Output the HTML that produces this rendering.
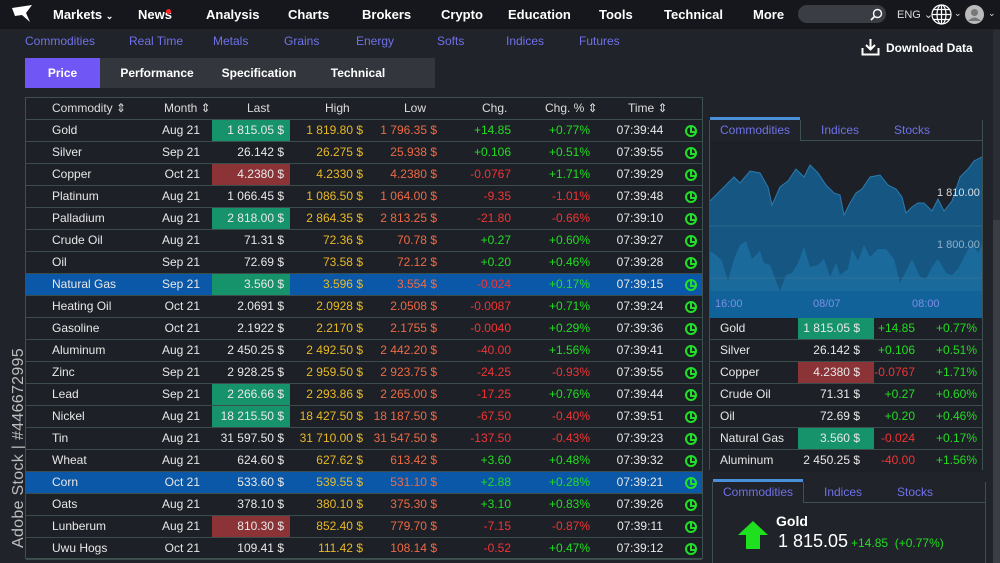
<!DOCTYPE html>
<html><head><meta charset="utf-8"><style>
*{margin:0;padding:0;box-sizing:border-box}
body{width:1000px;height:563px;overflow:hidden;background:#202329;font-family:"Liberation Sans",sans-serif;color:#e8e8e8;position:relative}
.a{position:absolute}
.nav{left:0;top:0;width:1000px;height:29px;background:#15171c}
.sub{position:absolute;top:34px;font-size:12px;color:#6f72e8}
.tab{position:absolute;top:58px;height:30px;font-size:12px;font-weight:bold;color:#fff;line-height:30px;text-align:center}
.tbl{left:25px;top:97px;width:678px;height:462px;border:1px solid #3d5250;background:#1d2026}
.hd{position:absolute;top:0;left:0;width:676px;height:22px;border-bottom:1px solid #3d5250;font-size:12px;line-height:21px;color:#ddd}
.r{position:absolute;left:0;width:676px;height:22px;border-bottom:1px solid #3a4d4b;font-size:12px;line-height:21px}
.r span,.hd span{position:absolute;top:0;white-space:nowrap}
.c1{left:26px}
.c2{left:110px;width:64px;text-align:right}
.c3{left:186px;width:78px;height:21px;text-align:right;padding-right:6px}
.c4{left:262px;width:75px;text-align:right;color:#e9b925}
.c5{left:336px;width:75px;text-align:right;color:#ee6a44}
.c6{left:410px;width:75px;text-align:right}
.c7{left:490px;width:74px;text-align:right}
.c8{left:580px;width:68px;text-align:center}
.c9{left:659px;top:5px!important;width:12px;height:12px;border:2px solid #22e02a;border-radius:50%}
.c9:after{content:"";position:absolute;left:3px;top:0px;width:3px;height:4px;border-left:2px solid #22e02a;border-bottom:2px solid #22e02a}
.g{color:#22dd22}.rd{color:#f03535}
.gb{background:#16936a}.rb{background:#8b3337}
.sel{background:#0b58a8}
.rt{position:absolute;left:710px;width:272px;height:22px;border-bottom:1px solid #3a4d4b;font-size:12px;line-height:21px;background:#1d2026}
.rt span{position:absolute;top:0;white-space:nowrap}
.d1{left:10px}.d2{left:88px;width:76px;height:21px;text-align:right;padding-right:14px}.d3{left:150px;width:55px;text-align:right}.d4{left:205px;width:62px;text-align:right;color:#22dd22}
</style></head><body>
<div class="a nav"></div>
<svg class="a" style="left:12px;top:5px" width="22" height="20" viewBox="0 0 22 20"><path d="M0 3 L20 0 L14 8 L18 17 L10 10 L3 11 Z" fill="#fff"/></svg>
<b class="a" style="left:53px;top:7px;font-size:13px;color:#fff">Markets <span style="font-size:9px">⌄</span></b>
<b class="a" style="left:138px;top:7px;font-size:13px;color:#fff">News</b>
<div class="a" style="left:166px;top:9px;width:5px;height:5px;border-radius:50%;background:#f22"></div>
<b class="a" style="left:206px;top:7px;font-size:13px;color:#fff">Analysis</b>
<b class="a" style="left:288px;top:7px;font-size:13px;color:#fff">Charts</b>
<b class="a" style="left:362px;top:7px;font-size:13px;color:#fff">Brokers</b>
<b class="a" style="left:441px;top:7px;font-size:13px;color:#fff">Crypto</b>
<b class="a" style="left:508px;top:7px;font-size:13px;color:#fff">Education</b>
<b class="a" style="left:599px;top:7px;font-size:13px;color:#fff">Tools</b>
<b class="a" style="left:664px;top:7px;font-size:13px;color:#fff">Technical</b>
<b class="a" style="left:753px;top:7px;font-size:13px;color:#fff">More</b>
<div class="a" style="left:798px;top:5px;width:88px;height:18px;border-radius:9px;background:#3a3d44"></div>
<svg class="a" style="left:870px;top:8px" width="13" height="13"><circle cx="7.5" cy="5.5" r="4" fill="none" stroke="#fff" stroke-width="1.4"/><path d="M4.5 8.5 L1 12" stroke="#fff" stroke-width="1.6"/></svg>
<div class="a" style="left:897px;top:8px;font-size:11px;color:#ddd">ENG ⌄</div>
<svg class="a" style="left:931px;top:4px" width="21" height="21" viewBox="0 0 21 21" fill="none" stroke="#fff" stroke-width="1.2"><circle cx="10.5" cy="10.5" r="9.5"/><ellipse cx="10.5" cy="10.5" rx="4.5" ry="9.5"/><path d="M1 10.5H20M2.5 5.5H18.5M2.5 15.5H18.5M10.5 1V20"/></svg>
<div class="a" style="left:954px;top:8px;font-size:9px;color:#ddd">⌄</div>
<svg class="a" style="left:965px;top:5px" width="19" height="19"><circle cx="9.5" cy="9.5" r="9.5" fill="#bbb"/><circle cx="9.5" cy="7.5" r="3.5" fill="#777"/><path d="M3 16 Q9.5 9 16 16" fill="#777"/></svg>
<div class="a" style="left:988px;top:8px;font-size:9px;color:#ddd">⌄</div>

<div class="sub" style="left:25px">Commodities</div>
<div class="sub" style="left:129px">Real Time</div>
<div class="sub" style="left:213px">Metals</div>
<div class="sub" style="left:284px">Grains</div>
<div class="sub" style="left:356px">Energy</div>
<div class="sub" style="left:437px">Softs</div>
<div class="sub" style="left:506px">Indices</div>
<div class="sub" style="left:579px">Futures</div>
<svg class="a" style="left:861px;top:38px" width="19" height="18" fill="none" stroke="#fff" stroke-width="2"><path d="M9.5 1V11M5 7L9.5 11.5L14 7M1.5 10V16.5H17.5V10"/></svg>
<b class="a" style="left:886px;top:41px;font-size:12px;color:#fff">Download Data</b>

<div class="a" style="left:25px;top:58px;width:410px;height:30px;background:#33363d"></div>
<div class="tab" style="left:25px;width:75px;background:#7057f5">Price</div>
<div class="tab" style="left:110px;width:94px">Performance</div>
<div class="tab" style="left:212px;width:94px">Specification</div>
<div class="tab" style="left:320px;width:76px">Technical</div>

<div class="a" style="left:10px;top:548px;transform:rotate(-90deg);transform-origin:0 0;font-size:16px;color:#bdbdbd;white-space:nowrap;letter-spacing:.3px">Adobe Stock | #446672995</div>

<div class="a tbl">
<div class="hd"><span class="c1">Commodity ⇕</span><span style="left:138px">Month ⇕</span><span style="left:221px">Last</span><span style="left:299px">High</span><span style="left:378px">Low</span><span style="left:456px">Chg.</span><span style="left:519px">Chg. % ⇕</span><span style="left:602px">Time ⇕</span></div>
<div class="r" style="top:22px"><span class="c1">Gold</span><span class="c2">Aug 21</span><span class="c3 gb">1 815.05 $</span><span class="c4">1 819.80 $</span><span class="c5">1 796.35 $</span><span class="c6 g">+14.85</span><span class="c7 g">+0.77%</span><span class="c8">07:39:44</span><span class="c9"></span></div>
<div class="r" style="top:44px"><span class="c1">Silver</span><span class="c2">Sep 21</span><span class="c3">26.142 $</span><span class="c4">26.275 $</span><span class="c5">25.938 $</span><span class="c6 g">+0.106</span><span class="c7 g">+0.51%</span><span class="c8">07:39:55</span><span class="c9"></span></div>
<div class="r" style="top:66px"><span class="c1">Copper</span><span class="c2">Oct 21</span><span class="c3 rb">4.2380 $</span><span class="c4">4.2330 $</span><span class="c5">4.2380 $</span><span class="c6 rd">-0.0767</span><span class="c7 g">+1.71%</span><span class="c8">07:39:29</span><span class="c9"></span></div>
<div class="r" style="top:88px"><span class="c1">Platinum</span><span class="c2">Aug 21</span><span class="c3">1 066.45 $</span><span class="c4">1 086.50 $</span><span class="c5">1 064.00 $</span><span class="c6 rd">-9.35</span><span class="c7 rd">-1.01%</span><span class="c8">07:39:48</span><span class="c9"></span></div>
<div class="r" style="top:110px"><span class="c1">Palladium</span><span class="c2">Aug 21</span><span class="c3 gb">2 818.00 $</span><span class="c4">2 864.35 $</span><span class="c5">2 813.25 $</span><span class="c6 rd">-21.80</span><span class="c7 rd">-0.66%</span><span class="c8">07:39:10</span><span class="c9"></span></div>
<div class="r" style="top:132px"><span class="c1">Crude Oil</span><span class="c2">Aug 21</span><span class="c3">71.31 $</span><span class="c4">72.36 $</span><span class="c5">70.78 $</span><span class="c6 g">+0.27</span><span class="c7 g">+0.60%</span><span class="c8">07:39:27</span><span class="c9"></span></div>
<div class="r" style="top:154px"><span class="c1">Oil</span><span class="c2">Sep 21</span><span class="c3">72.69 $</span><span class="c4">73.58 $</span><span class="c5">72.12 $</span><span class="c6 g">+0.20</span><span class="c7 g">+0.46%</span><span class="c8">07:39:28</span><span class="c9"></span></div>
<div class="r sel" style="top:176px"><span class="c1">Natural Gas</span><span class="c2">Sep 21</span><span class="c3 gb">3.560 $</span><span class="c4">3.596 $</span><span class="c5">3.554 $</span><span class="c6 rd">-0.024</span><span class="c7 g">+0.17%</span><span class="c8">07:39:15</span><span class="c9"></span></div>
<div class="r" style="top:198px"><span class="c1">Heating Oil</span><span class="c2">Oct 21</span><span class="c3">2.0691 $</span><span class="c4">2.0928 $</span><span class="c5">2.0508 $</span><span class="c6 rd">-0.0087</span><span class="c7 g">+0.71%</span><span class="c8">07:39:24</span><span class="c9"></span></div>
<div class="r" style="top:220px"><span class="c1">Gasoline</span><span class="c2">Oct 21</span><span class="c3">2.1922 $</span><span class="c4">2.2170 $</span><span class="c5">2.1755 $</span><span class="c6 rd">-0.0040</span><span class="c7 g">+0.29%</span><span class="c8">07:39:36</span><span class="c9"></span></div>
<div class="r" style="top:242px"><span class="c1">Aluminum</span><span class="c2">Aug 21</span><span class="c3">2 450.25 $</span><span class="c4">2 492.50 $</span><span class="c5">2 442.20 $</span><span class="c6 rd">-40.00</span><span class="c7 g">+1.56%</span><span class="c8">07:39:41</span><span class="c9"></span></div>
<div class="r" style="top:264px"><span class="c1">Zinc</span><span class="c2">Sep 21</span><span class="c3">2 928.25 $</span><span class="c4">2 959.50 $</span><span class="c5">2 923.75 $</span><span class="c6 rd">-24.25</span><span class="c7 rd">-0.93%</span><span class="c8">07:39:55</span><span class="c9"></span></div>
<div class="r" style="top:286px"><span class="c1">Lead</span><span class="c2">Sep 21</span><span class="c3 gb">2 266.66 $</span><span class="c4">2 293.86 $</span><span class="c5">2 265.00 $</span><span class="c6 rd">-17.25</span><span class="c7 g">+0.76%</span><span class="c8">07:39:44</span><span class="c9"></span></div>
<div class="r" style="top:308px"><span class="c1">Nickel</span><span class="c2">Aug 21</span><span class="c3 gb">18 215.50 $</span><span class="c4">18 427.50 $</span><span class="c5">18 187.50 $</span><span class="c6 rd">-67.50</span><span class="c7 rd">-0.40%</span><span class="c8">07:39:51</span><span class="c9"></span></div>
<div class="r" style="top:330px"><span class="c1">Tin</span><span class="c2">Aug 21</span><span class="c3">31 597.50 $</span><span class="c4">31 710.00 $</span><span class="c5">31 547.50 $</span><span class="c6 rd">-137.50</span><span class="c7 rd">-0.43%</span><span class="c8">07:39:23</span><span class="c9"></span></div>
<div class="r" style="top:352px"><span class="c1">Wheat</span><span class="c2">Aug 21</span><span class="c3">624.60 $</span><span class="c4">627.62 $</span><span class="c5">613.42 $</span><span class="c6 g">+3.60</span><span class="c7 g">+0.48%</span><span class="c8">07:39:32</span><span class="c9"></span></div>
<div class="r sel" style="top:374px"><span class="c1">Corn</span><span class="c2">Oct 21</span><span class="c3">533.60 $</span><span class="c4">539.55 $</span><span class="c5">531.10 $</span><span class="c6 g">+2.88</span><span class="c7 g">+0.28%</span><span class="c8">07:39:21</span><span class="c9"></span></div>
<div class="r" style="top:396px"><span class="c1">Oats</span><span class="c2">Aug 21</span><span class="c3">378.10 $</span><span class="c4">380.10 $</span><span class="c5">375.30 $</span><span class="c6 g">+3.10</span><span class="c7 g">+0.83%</span><span class="c8">07:39:26</span><span class="c9"></span></div>
<div class="r" style="top:418px"><span class="c1">Lunberum</span><span class="c2">Aug 21</span><span class="c3 rb">810.30 $</span><span class="c4">852.40 $</span><span class="c5">779.70 $</span><span class="c6 rd">-7.15</span><span class="c7 rd">-0.87%</span><span class="c8">07:39:11</span><span class="c9"></span></div>
<div class="r" style="top:440px"><span class="c1">Uwu Hogs</span><span class="c2">Oct 21</span><span class="c3">109.41 $</span><span class="c4">111.42 $</span><span class="c5">108.14 $</span><span class="c6 rd">-0.52</span><span class="c7 g">+0.47%</span><span class="c8">07:39:12</span><span class="c9"></span></div>
</div>

<!-- right panel -->
<div class="a" style="left:710px;top:117px;width:90px;height:3px;background:#4a90d8"></div>
<div class="a" style="left:709px;top:120px;width:274px;height:350px;border:1px solid #3d5250;border-top:none"></div>
<div class="a" style="left:800px;top:120px;width:182px;height:21px;border-bottom:1px solid #3d5250;border-left:1px solid #3d5250"></div>
<div class="a" style="left:720px;top:123px;font-size:12px;color:#6f72e8">Commodities</div>
<div class="a" style="left:821px;top:123px;font-size:12px;color:#6f72e8">Indices</div>
<div class="a" style="left:894px;top:123px;font-size:12px;color:#6f72e8">Stocks</div>
<svg class="a" style="left:710px;top:141px" width="272" height="177" viewBox="0 0 272 177">
<rect x="0" y="0" width="272" height="177" fill="#1d2026"/>
<path d="M0 60 L8 52 L16 44 L24 36 L30 42 L40 30 L50 32 L58 46 L62 64 L70 46 L78 40 L86 28 L94 36 L100 24 L108 32 L116 44 L124 52 L130 54 L134 74 L140 62 L146 52 L152 48 L160 36 L170 34 L178 44 L186 48 L192 56 L196 72 L202 66 L208 62 L214 62 L222 70 L228 58 L234 70 L242 60 L250 36 L252 34 L258 28 L264 20 L272 16 L272 177 L0 177 Z" fill="#155782"/>
<path d="M0 106 L8 104 L12 90 L18 82 L24 96 L28 108 L32 100 L40 108 L46 96 L50 98 L56 100 L60 90 L68 80 L76 78 L84 88 L92 94 L96 86 L100 86 L106 78 L112 76 L118 84 L126 92 L132 90 L140 78 L146 80 L152 72 L160 82 L166 76 L170 86 L178 98 L184 90 L190 80 L196 80 L206 90 L212 92 L218 108 L224 122 L230 140 L238 130 L244 142 L248 136 L256 126 L260 140 L264 126 L272 102 V177 H0 Z" fill="#1b6a9c" opacity=".0"/>
<path d="M0 110 L6 114 L12 120 L18 140 L24 118 L30 104 L36 100 L42 118 L50 110 L54 122 L60 124 L66 140 L70 150 L76 134 L82 132 L88 122 L94 106 L100 126 L108 124 L114 118 L120 136 L126 122 L130 134 L138 128 L142 108 L148 120 L154 104 L160 116 L168 108 L176 108 L184 118 L190 142 L196 130 L202 118 L210 136 L216 138 L222 126 L228 118 L236 132 L242 134 L248 128 L256 112 L262 102 L268 112 L272 104 V177 H0 Z" fill="#1b6a9c"/>
<path d="M0 60 L8 52 L16 44 L24 36 L30 42 L40 30 L50 32 L58 46 L62 64 L70 46 L78 40 L86 28 L94 36 L100 24 L108 32 L116 44 L124 52 L130 54 L134 74 L140 62 L146 52 L152 48 L160 36 L170 34 L178 44 L186 48 L192 56 L196 72 L202 66 L208 62 L214 62 L222 70 L228 58 L234 70 L242 60 L250 36 L252 34 L258 28 L264 20 L272 16" fill="none" stroke="#2a7bb0" stroke-width="1"/>
<path d="M0 85 H272 M0 137 H272" stroke="#4c7896" stroke-width="0.8" opacity=".6"/>
<rect x="0" y="150" width="272" height="27" fill="#12629a"/>
<text x="227" y="55" font-family="Liberation Sans" font-size="11" fill="#d8dde4">1 810.00</text>
<text x="227" y="107" font-family="Liberation Sans" font-size="11" fill="#8fb0c8">1 800.00</text>
<text x="5" y="166" font-family="Liberation Sans" font-size="11" fill="#7d8ee8">16:00</text>
<text x="103" y="166" font-family="Liberation Sans" font-size="11" fill="#7d8ee8">08/07</text>
<text x="202" y="166" font-family="Liberation Sans" font-size="11" fill="#7d8ee8">08:00</text>
</svg>
<div class="rt sel" style="top:318px"><span class="d1">Gold</span><span class="d2 gb">1 815.05 $</span><span class="d3 g">+14.85</span><span class="d4">+0.77%</span></div>
<div class="rt" style="top:340px"><span class="d1">Silver</span><span class="d2">26.142 $</span><span class="d3 g">+0.106</span><span class="d4">+0.51%</span></div>
<div class="rt" style="top:362px"><span class="d1">Copper</span><span class="d2 rb">4.2380 $</span><span class="d3 rd">-0.0767</span><span class="d4">+1.71%</span></div>
<div class="rt" style="top:384px"><span class="d1">Crude Oil</span><span class="d2">71.31 $</span><span class="d3 g">+0.27</span><span class="d4">+0.60%</span></div>
<div class="rt" style="top:406px"><span class="d1">Oil</span><span class="d2">72.69 $</span><span class="d3 g">+0.20</span><span class="d4">+0.46%</span></div>
<div class="rt" style="top:428px"><span class="d1">Natural Gas</span><span class="d2 gb">3.560 $</span><span class="d3 rd">-0.024</span><span class="d4">+0.17%</span></div>
<div class="rt" style="top:450px;border-bottom:none"><span class="d1">Aluminum</span><span class="d2">2 450.25 $</span><span class="d3 rd">-40.00</span><span class="d4">+1.56%</span></div>

<div class="a" style="left:713px;top:479px;width:90px;height:3px;background:#4a90d8"></div>
<div class="a" style="left:712px;top:482px;width:274px;height:81px;border:1px solid #3d5250;border-top:none;border-bottom:none"></div>
<div class="a" style="left:803px;top:482px;width:183px;height:21px;border-bottom:1px solid #3d5250;border-left:1px solid #3d5250"></div>
<div class="a" style="left:723px;top:485px;font-size:12px;color:#6f72e8">Commodities</div>
<div class="a" style="left:824px;top:485px;font-size:12px;color:#6f72e8">Indices</div>
<div class="a" style="left:897px;top:485px;font-size:12px;color:#6f72e8">Stocks</div>
<svg class="a" style="left:737px;top:521px" width="32" height="28"><path d="M16 0 L31 14 H23 V28 H9 V14 H1 Z" fill="#1ee01e"/></svg>
<b class="a" style="left:776px;top:513px;font-size:14px;color:#fff">Gold</b>
<div class="a" style="left:778px;top:531px;font-size:18px;color:#fff">1 815.05</div>
<div class="a" style="left:851px;top:536px;font-size:12px;color:#22dd22">+14.85&nbsp;&nbsp;(+0.77%)</div>
<div class="a" style="left:993px;top:30px;width:7px;height:533px;background:#2a2d33"></div>
<div class="a" style="left:993px;top:220px;width:7px;height:343px;background:#3a3d43"></div>
</body></html>
